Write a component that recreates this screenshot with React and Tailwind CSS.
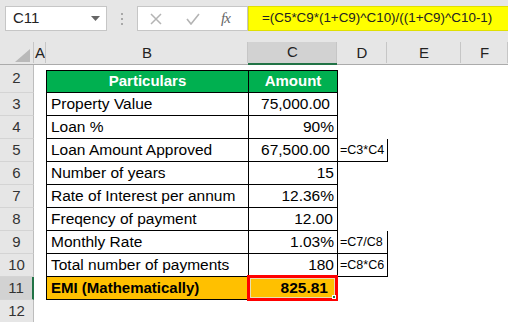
import React from 'react';

const rows = [
  { n: 3, label: 'Property Value', value: '75,000.00', pr: 'pr-[7px]' },
  { n: 4, label: 'Loan %', value: '90%', pr: 'pr-[3px]' },
  { n: 5, label: 'Loan Amount Approved', value: '67,500.00', pr: 'pr-[7px]', note: '=C3*C4' },
  { n: 6, label: 'Number of years', value: '15', pr: 'pr-[3px]' },
  { n: 7, label: 'Rate of Interest per annum', value: '12.36%', pr: 'pr-[3px]' },
  { n: 8, label: 'Freqency of payment', value: '12.00', pr: 'pr-[4px]' },
  { n: 9, label: 'Monthly Rate', value: '1.03%', pr: 'pr-[3px]', note: '=C7/C8' },
  { n: 10, label: 'Total number of payments', value: '180', pr: 'pr-[3px]', note: '=C8*C6' },
];

function ColHead({ w, label, active }) {
  return (
    <div className={`${w} relative flex items-center justify-center ${active ? 'bg-[#d2d2d2] border-b-2 border-[#217346]' : 'border-b border-[#ababab]'}`}>
      <span className="text-[15px] text-[#222]">{label}</span>
      <span className="absolute right-0 top-0 h-[21px] w-px bg-[#c6c6c6]" />
    </div>
  );
}

function RowHead({ n, h, active }) {
  return (
    <div
      className={`${h} flex items-center justify-center border-b border-[#d4d4d4] text-[15px] ${
        active ? 'bg-[#d2d2d2] text-[#333] border-r-2 border-r-[#217346]' : 'text-[#333] border-r border-r-[#bdbdbd]'
      }`}
    >
      {n}
    </div>
  );
}

export default function App() {
  return (
    <div className="w-[508px] h-[322px] overflow-hidden bg-white text-black font-['Liberation_Sans',Arial,sans-serif]">
      {/* formula bar area */}
      <div className="h-[42px] bg-[#e6e6e6] pt-[6px] flex items-start">
        <div className="ml-[5px] w-[102px] h-[25px] bg-white border border-[#c6c6c6] flex items-center justify-between pl-[7px] pr-[6px]">
          <span className="text-[15px] text-[#222]">C11</span>
          <svg width="9" height="5" viewBox="0 0 9 5">
            <path d="M0 0h9L4.5 5z" fill="#666" />
          </svg>
        </div>
        <div className="w-[30px] h-[25px] flex flex-col items-center justify-center gap-[3px]">
          <span className="w-[2px] h-[2px] bg-[#a8a8a8]" />
          <span className="w-[2px] h-[2px] bg-[#a8a8a8]" />
          <span className="w-[2px] h-[2px] bg-[#a8a8a8]" />
        </div>
        <div className="w-[111px] h-[25px] bg-white border border-[#c6c6c6] flex items-center">
          <svg className="ml-[12px]" width="12" height="12" viewBox="0 0 12 12">
            <path d="M1 1l10 10M11 1L1 11" stroke="#b4b4b4" strokeWidth="1.5" />
          </svg>
          <svg className="ml-[24px]" width="14" height="12" viewBox="0 0 14 12">
            <path d="M1 6l4 5L13 1" stroke="#b4b4b4" strokeWidth="1.6" fill="none" />
          </svg>
          <span className="ml-[21px] text-[15px] italic text-[#666] font-['Liberation_Serif',serif] tracking-[-1px]">fx</span>
        </div>
        <div className="flex-1 h-[25px] bg-[#ffff00] border-y border-l border-[#e0e000] flex items-center pl-[13px]">
          <span className="text-[13.4px] text-[#222]">=(C5*C9*(1+C9)^C10)/((1+C9)^C10-1)</span>
        </div>
      </div>

      {/* column headers */}
      <div className="h-[23px] bg-[#e6e6e6] flex">
        <div className="w-[34px] relative border-b border-[#ababab]">
          <svg className="absolute right-[4px] bottom-[2px]" width="15" height="13" viewBox="0 0 15 13">
            <path d="M15 0V13H0z" fill="#b9b9b9" />
          </svg>
          <span className="absolute right-0 top-0 h-[21px] w-px bg-[#c6c6c6]" />
        </div>
        <ColHead w="w-[12px]" label="A" />
        <ColHead w="w-[202px]" label="B" />
        <ColHead w="w-[89px]" label="C" active />
        <ColHead w="w-[50px]" label="D" />
        <ColHead w="w-[74px]" label="E" />
        <ColHead w="flex-1" label="F" />
      </div>

      {/* body */}
      <div className="flex">
        <div className="w-[34px] bg-[#e6e6e6] flex flex-col">
          <RowHead n={2} h="h-[28px]" />
          {rows.map((r) => (
            <RowHead key={r.n} n={r.n} h="h-[23px]" />
          ))}
          <RowHead n={11} h="h-[23px]" active />
          <RowHead n={12} h="h-[23px]" />
        </div>

        <div className="pt-[5px] pl-[12px] flex flex-col">
          {/* header row */}
          <div className="flex h-[23px]">
            <div className="w-[203px] bg-[#00b050] border border-black flex items-center justify-center text-white font-bold text-[15px]">
              Particulars
            </div>
            <div className="w-[89px] bg-[#00b050] border-y border-r border-black flex items-center justify-center text-white font-bold text-[15px]">
              Amount
            </div>
          </div>

          {rows.map((r) => (
            <div key={r.n} className="flex h-[23px]">
              <div className="w-[203px] border-x border-b border-black flex items-center pl-[4px] text-[15.5px]">
                {r.label}
              </div>
              <div className={`w-[89px] border-r border-b border-black flex items-center justify-end text-[15.5px] ${r.pr}`}>
                {r.value}
              </div>
              {r.note && (
                <div className="w-[50px] border-r border-b border-black flex items-center pl-[2px] text-[12.5px]">
                  {r.note}
                </div>
              )}
            </div>
          ))}

          {/* EMI row */}
          <div className="flex h-[23px]">
            <div className="w-[203px] bg-[#ffc000] border-x border-b border-black flex items-center pl-[4px] font-bold text-[15px]">
              EMI (Mathematically)
            </div>
            <div className="w-[89px] relative bg-[#ffc000] border-r border-b border-black flex items-center justify-end pr-[9px] font-bold text-[15.5px]">
              825.81
              <span className="absolute -left-[2px] -top-[2px] -right-[1px] -bottom-[2px] border-[3px] border-[#ff0000]" />
              <span className="absolute left-[1px] top-[1px] right-[2px] bottom-[1px] border border-[#e6e0b0]" />
              <span className="absolute right-[1px] bottom-[0px] w-[4px] h-[4px] bg-[#217346] border border-white" />
            </div>
          </div>
        </div>
      </div>
    </div>
  );
}
